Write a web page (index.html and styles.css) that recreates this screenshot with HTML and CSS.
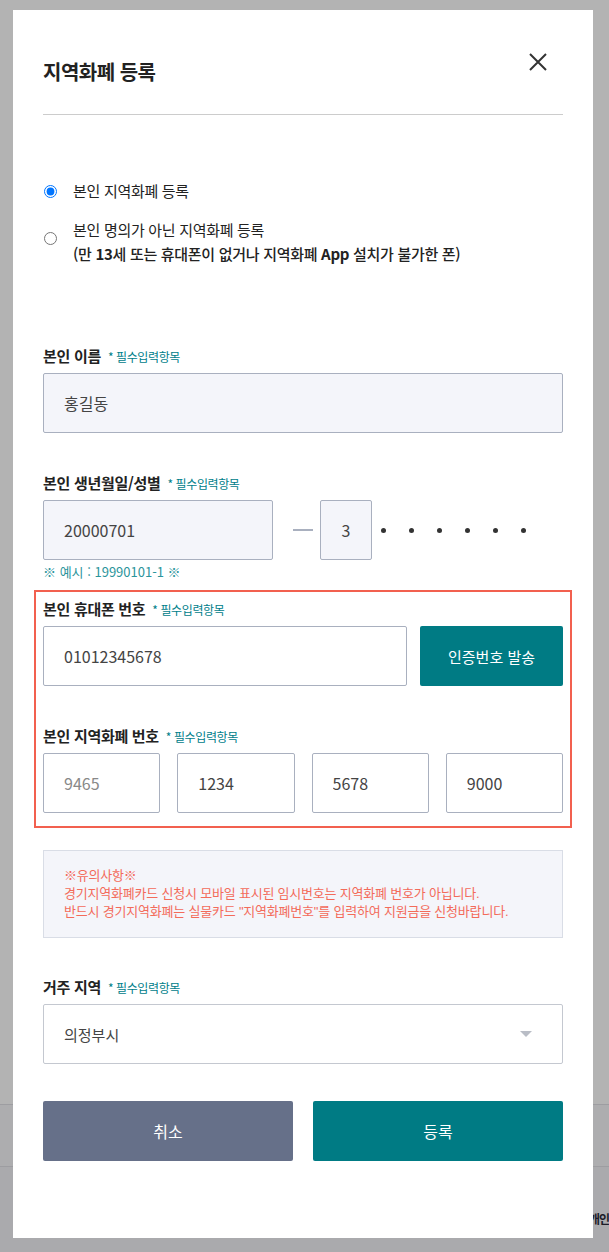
FILE: index.html
```html
<!DOCTYPE html>
<html lang="ko">
<head>
    <meta charset="UTF-8">
    <meta name="viewport" content="width=device-width, initial-scale=1.0">
    <title>지역화폐 등록</title>
    <link rel="stylesheet" href="styles.css">
</head>
<body>
    <!-- page behind the dimmed overlay -->
    <div class="site">
        <div class="site-main"></div>
        <div class="site-footer">
            <div class="footer-links"></div>
            <div class="footer-info"><span>개인</span></div>
        </div>
    </div>

    <div class="modal" role="dialog" aria-labelledby="modal-title">
        <div class="modal-header">
            <h2 class="modal-title" id="modal-title">지역화폐 등록</h2>
            <button class="close" type="button" aria-label="닫기">
                <svg width="18" height="18" viewBox="0 0 18 18">
                    <path d="M1 1L17 17M17 1L1 17" stroke="#333" stroke-width="2" fill="none"/>
                </svg>
            </button>
        </div>

        <div class="options">
            <label class="option">
                <input class="radio" type="radio" name="owner" checked>
                <span>본인 지역화폐 등록</span>
            </label>
            <label class="option option-multi">
                <input class="radio" type="radio" name="owner">
                <span>
                    본인 명의가 아닌 지역화폐 등록<br>
                    <span class="option-note">(만 <b>13</b>세 또는 휴대폰이 없거나 지역화폐 <b>App</b> 설치가 불가한 폰)</span>
                </span>
            </label>
        </div>

        <div class="field field-first">
            <div class="field-label">본인 이름 <span class="required">* 필수입력항목</span></div>
            <input class="input input-filled" type="text" value="홍길동" readonly>
        </div>

        <div class="field">
            <div class="field-label">본인 생년월일/성별 <span class="required">* 필수입력항목</span></div>
            <div class="birth-row">
                <input class="input input-filled birth-date" type="text" value="20000701" readonly>
                <span class="birth-dash"></span>
                <input class="input input-filled birth-gender" type="text" value="3" readonly>
                <div class="birth-dots">
                    <span></span><span></span><span></span><span></span><span></span><span></span>
                </div>
            </div>
            <p class="hint">※ 예시 : 19990101-1 ※</p>
        </div>

        <div class="verify-box">
            <div class="field field-first">
                <div class="field-label">본인 휴대폰 번호 <span class="required">* 필수입력항목</span></div>
                <div class="phone-row">
                    <input class="input" type="text" value="01012345678">
                    <button class="btn btn-teal btn-send" type="button">인증번호 발송</button>
                </div>
            </div>
            <div class="field">
                <div class="field-label">본인 지역화폐 번호 <span class="required">* 필수입력항목</span></div>
                <div class="card-row">
                    <input class="input input-muted" type="text" value="9465">
                    <input class="input" type="text" value="1234">
                    <input class="input" type="text" value="5678">
                    <input class="input" type="text" value="9000">
                </div>
            </div>
        </div>

        <div class="notice">
            ※유의사항※<br>
            경기지역화폐카드 신청시 모바일 표시된 임시번호는 지역화폐 번호가 아닙니다.<br>
            반드시 경기지역화폐는 실물카드 "지역화폐번호"를 입력하여 지원금을 신청바랍니다.
        </div>

        <div class="field field-region">
            <div class="field-label">거주 지역 <span class="required">* 필수입력항목</span></div>
            <div class="select">
                <span>의정부시</span>
                <span class="select-arrow"></span>
            </div>
        </div>

        <div class="actions">
            <button class="btn btn-gray" type="button">취소</button>
            <button class="btn btn-teal" type="button">등록</button>
        </div>
    </div>
</body>
</html>
```

FILE: styles.css
```css
body {
    margin: 0;
    height: 1252px;
    overflow: hidden;
    background-color: #aaaaad;
    font-family: "Noto Sans CJK KR", "Noto Sans", sans-serif;
    color: #222;
}

/* dimmed page behind the modal */
.site-main {
    height: 1104px;
    background-color: #b3b3b3;
}

.footer-links {
    height: 61px;
    background-color: #adadaf;
    border-top: 1px solid #9d9da1;
    border-bottom: 1px solid #9d9da1;
}

.footer-info {
    display: flex;
    justify-content: flex-end;
    padding-top: 43px;
    font-size: 12px;
    font-weight: 700;
    line-height: 18px;
    letter-spacing: -1px;
    color: #1c1c28;
    white-space: nowrap;
}

/* modal */
.modal {
    position: absolute;
    top: 10px;
    left: 13px;
    width: 580px;
    box-sizing: border-box;
    padding: 0 30px 77px;
    background-color: #fff;
}

.modal-header {
    display: flex;
    justify-content: space-between;
    align-items: flex-start;
    padding: 43px 0 29px;
    border-bottom: 1px solid #ccc;
}

.modal-title {
    margin: 6px 0 0;
    font-size: 20px;
    line-height: 26px;
    font-weight: 700;
    letter-spacing: -0.5px;
    color: #222;
}

.close {
    margin-right: 16px;
    padding: 0;
    border: none;
    background: none;
    width: 18px;
    height: 18px;
    cursor: pointer;
}

.close svg {
    display: block;
}

.options {
    display: flex;
    flex-direction: column;
    gap: 15px;
    margin-top: 64px;
}

.option {
    display: flex;
    align-items: center;
    gap: 16px;
    font-size: 15px;
    line-height: 24px;
    letter-spacing: -0.3px;
    color: #222;
    cursor: pointer;
}

.radio {
    flex-shrink: 0;
    width: 13px;
    height: 13px;
    margin: 0 0 0 1px;
}

.option-multi .radio {
    margin-bottom: 8px;
}

.option-note {
    font-weight: 500;
}

/* fields */
.field {
    margin-top: 40px;
}

.field-first {
    margin-top: 0;
}

.options + .field {
    margin-top: 80px;
}

.field-label {
    display: flex;
    align-items: baseline;
    gap: 7px;
    height: 20px;
    margin-bottom: 7px;
    font-size: 15px;
    font-weight: 700;
    line-height: 20px;
    letter-spacing: -0.3px;
    color: #222;
}

.required {
    font-size: 12px;
    font-weight: 400;
    line-height: 16px;
    letter-spacing: -0.4px;
    color: #00808a;
}

.input {
    display: block;
    width: 100%;
    height: 60px;
    box-sizing: border-box;
    padding: 0 20px;
    border: 1px solid #a9b0bf;
    border-radius: 2px;
    background-color: #fff;
    font-family: inherit;
    font-size: 16px;
    color: #444;
    outline: none;
}

.input-filled {
    background-color: #f4f5fa;
}

.input-muted {
    color: #888;
}

.birth-row {
    display: flex;
    align-items: center;
}

.birth-date {
    width: 230px;
}

.birth-dash {
    width: 20px;
    height: 2px;
    margin: 0 7px 0 20px;
    background-color: #a9b0bf;
}

.birth-gender {
    width: 52px;
    padding: 0;
    text-align: center;
}

.birth-dots {
    display: flex;
    gap: 23px;
    margin-left: 9px;
}

.birth-dots span {
    width: 5px;
    height: 5px;
    border-radius: 50%;
    background-color: #333;
}

.hint {
    height: 18px;
    margin: 3px 0 0;
    font-size: 13px;
    line-height: 18px;
    color: #2b949b;
}

/* highlighted verification block */
.verify-box {
    margin: 9px -9px 0;
    padding: 7px 7px 13px;
    border: 2px solid #f2604f;
}

.phone-row {
    display: flex;
    gap: 13px;
}

.btn-send {
    flex-shrink: 0;
    width: 143px;
    font-size: 16px;
}

.card-row {
    display: grid;
    grid-template-columns: repeat(4, 1fr);
    gap: 17px;
}

.notice {
    margin-top: 22px;
    padding: 16px 20px;
    border: 1px solid #d9dde6;
    background-color: #f4f5fa;
    font-family: "Liberation Sans", "Noto Sans CJK KR", sans-serif;
    font-size: 13px;
    line-height: 18px;
    letter-spacing: -0.2px;
    color: #f36b5a;
}

.field-region {
    margin-top: 39px;
}

.select {
    display: flex;
    justify-content: space-between;
    align-items: center;
    height: 60px;
    box-sizing: border-box;
    padding: 0 30px 0 20px;
    border: 1px solid #c4c8d0;
    border-radius: 2px;
    background-color: #fff;
    font-size: 15px;
    color: #444;
}

.select-arrow {
    width: 0;
    height: 0;
    border-left: 6px solid transparent;
    border-right: 6px solid transparent;
    border-top: 6px solid #b9bdc6;
}

/* buttons */
.btn {
    height: 60px;
    border: none;
    border-radius: 2px;
    font-family: inherit;
    font-size: 15px;
    color: #fff;
    cursor: pointer;
}

.btn-teal {
    background-color: #007b84;
}

.btn-gray {
    background-color: #667089;
}

.actions {
    display: grid;
    grid-template-columns: 1fr 1fr;
    gap: 20px;
    margin-top: 37px;
}

.actions .btn {
    font-size: 16px;
}
```
